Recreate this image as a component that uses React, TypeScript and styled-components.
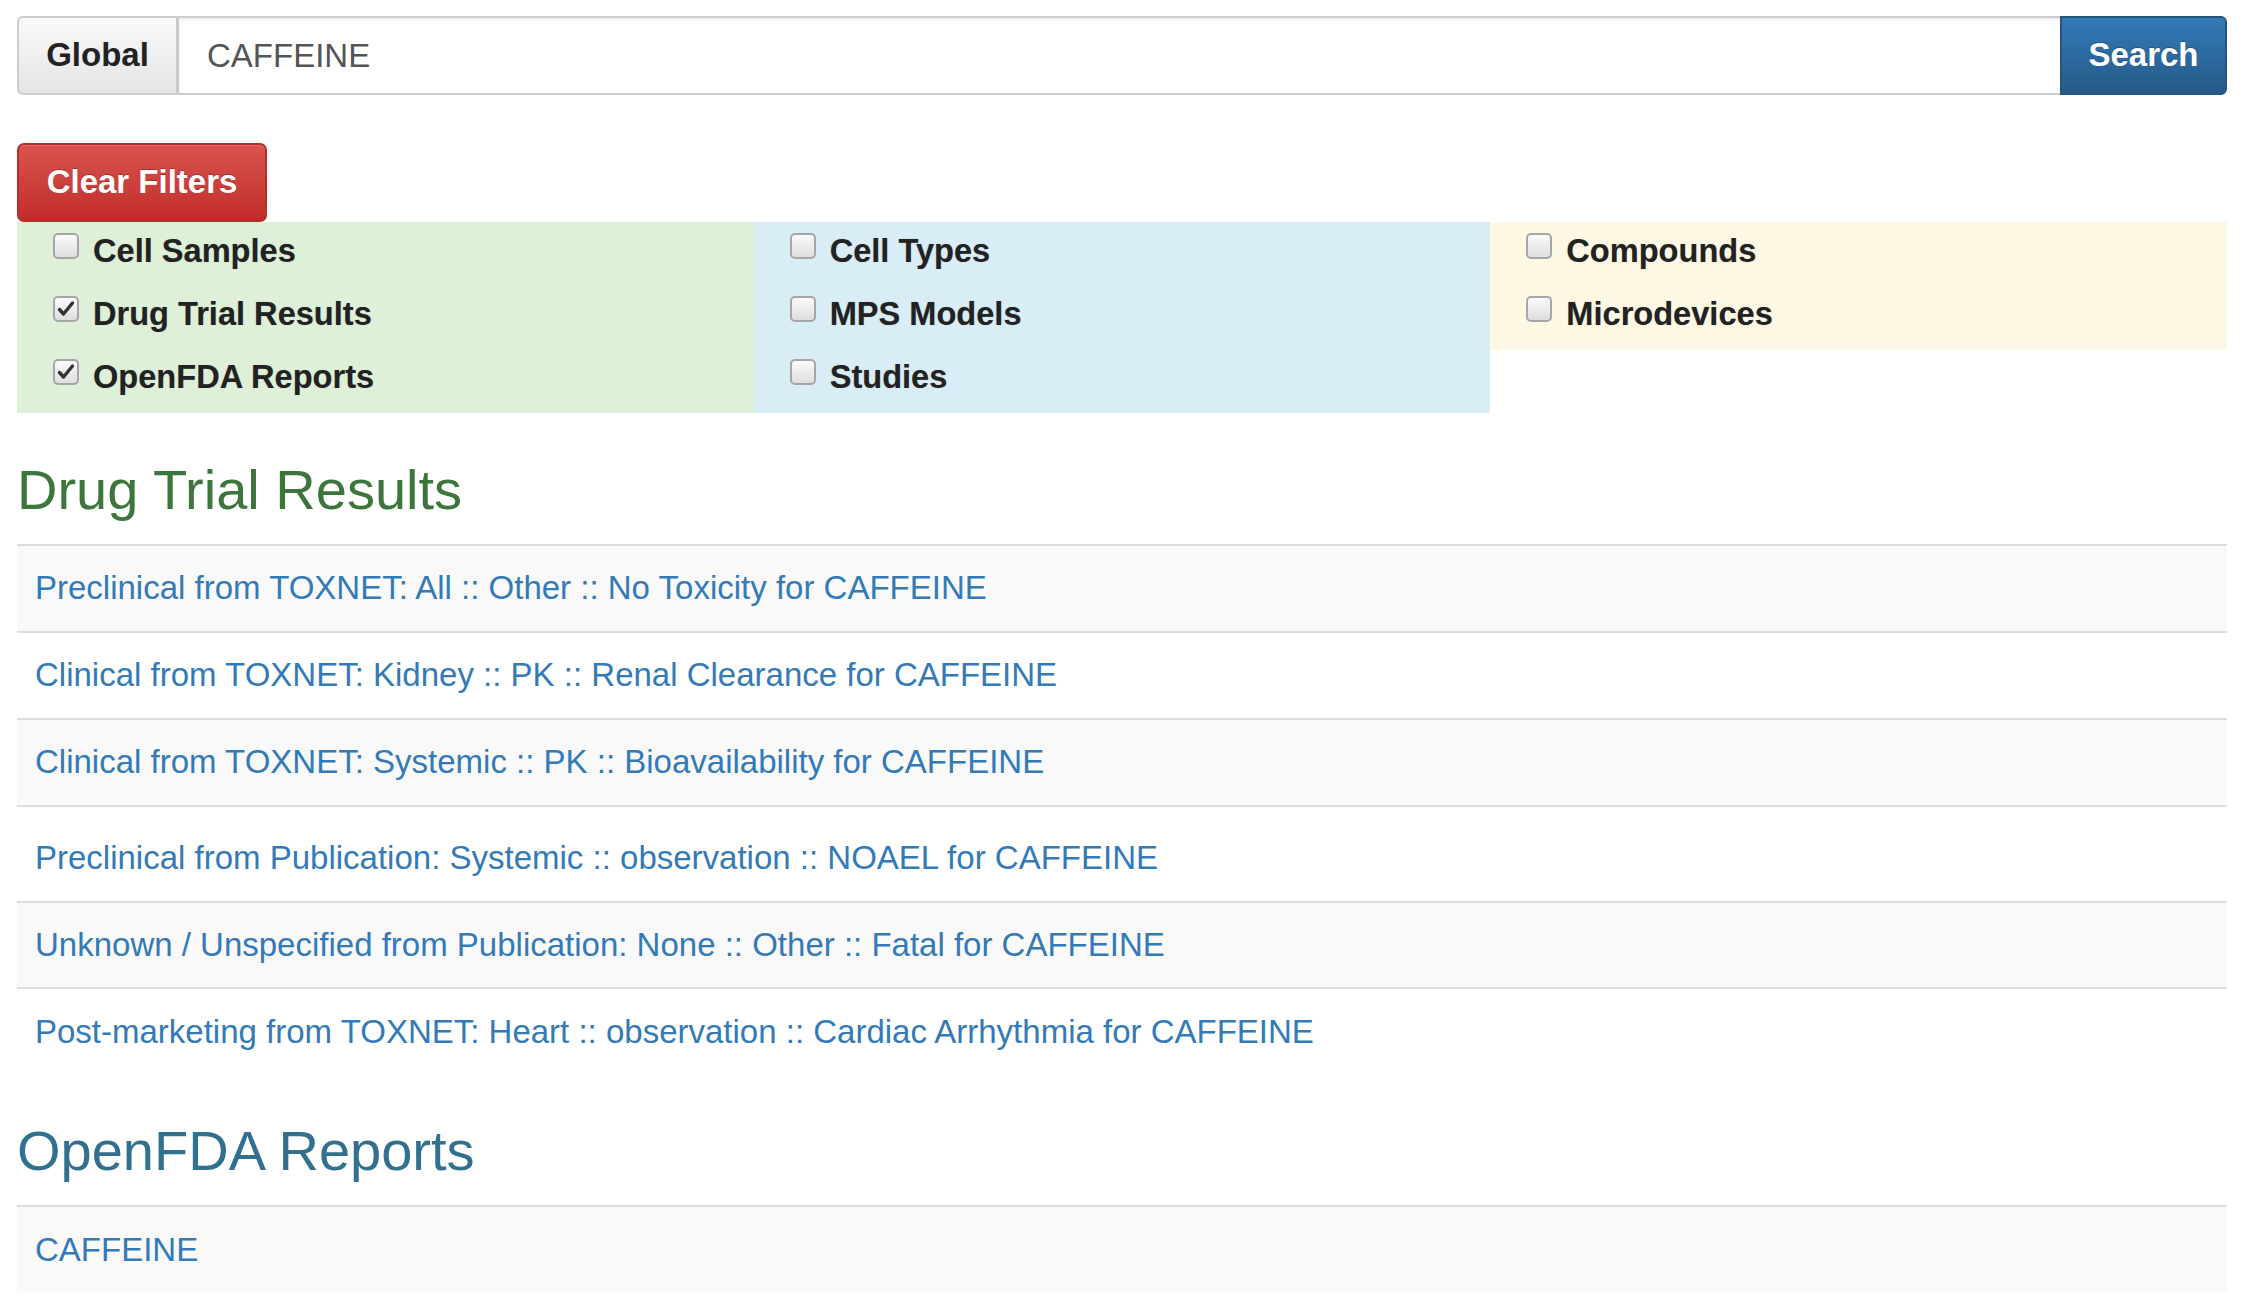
import React from "react";
import styled, {createGlobalStyle} from "styled-components";

const GlobalStyle = createGlobalStyle`
  html, body {
    margin: 0;
    padding: 0;
    background: #fff;
  }

  body {
    font-family: "Liberation Sans", Arial, Helvetica, sans-serif;
    font-size: 33px;
    line-height: 46.6px;
    color: #333;
  }

  * {
    box-sizing: border-box;
  }
`;

const Page = styled.div`
  padding: 16px 32px 0 17px;
`;

const SearchBar = styled.div`
  display: flex;
  height: 79px;
`;

const Addon = styled.div`
  width: 162px;
  display: flex;
  align-items: center;
  justify-content: center;
  font-weight: bold;
  color: #222;
  background: linear-gradient(to bottom, #fafafa 0%, #e4e4e4 100%);
  border: 2px solid #ccc;
  border-right: 3px solid #c8c8c8;
  border-radius: 6px 0 0 6px;
`;

const SearchInput = styled.input`
  flex: 1;
  height: 100%;
  border: 2px solid #ccc;
  border-left: none;
  border-right: none;
  padding: 0 28px;
  font: inherit;
  color: #555;
  outline: none;
  box-shadow: inset 0 2px 3px rgba(0, 0, 0, 0.075);
`;

const SearchButton = styled.button`
  width: 167px;
  height: 100%;
  border: 2px solid #245580;
  border-radius: 0 6px 6px 0;
  background: linear-gradient(to bottom, #337ab7 0%, #265a88 100%);
  color: #fff;
  font: inherit;
  font-weight: bold;
  text-shadow: 0 -1px 0 rgba(0, 0, 0, 0.25);
  cursor: pointer;
`;

const ClearButton = styled.button`
  display: block;
  margin-top: 48px;
  width: 250px;
  height: 79px;
  border: 2px solid #b92c28;
  border-radius: 7px;
  background: linear-gradient(to bottom, #d9534f 0%, #c12e2a 100%);
  color: #fff;
  font: inherit;
  font-weight: bold;
  text-shadow: 0 -1px 0 rgba(0, 0, 0, 0.25);
  box-shadow: inset 0 1px 0 rgba(255, 255, 255, 0.15), 0 1px 1px rgba(0, 0, 0, 0.075);
  cursor: pointer;
`;

type Tone = "success" | "info" | "warning";

const toneBg: Record<Tone, string> = {
    success: "#dff0d8",
    info: "#d9edf7",
    warning: "#fcf8e3",
};

const FilterRow = styled.div`
  display: grid;
  grid-template-columns: repeat(3, 1fr);
  align-items: start;
`;

const FilterColumn = styled.div<{ $tone: Tone }>`
  background: ${({$tone}) => toneBg[$tone]};
  padding: 6px 0 12px 36px;
  display: flex;
  flex-direction: column;
  gap: 16px;
`;

const FilterItem = styled.label`
  display: flex;
  align-items: flex-start;
  height: 47px;
  font-weight: bold;
  font-size: 32.6px;
  color: #222;
  text-shadow: 0 0 1px rgba(0, 0, 0, 0.25);
  cursor: pointer;
`;

const CheckBox = styled.span`
  flex: none;
  width: 26px;
  height: 26px;
  margin: 5px 14px 0 0;
  border: 2px solid #a6a6a6;
  border-radius: 5px;
  background: linear-gradient(to bottom, #fbfbfb 0%, #dedede 100%);
  display: flex;
  align-items: center;
  justify-content: center;
`;

const SectionTitle = styled.h3<{ $tone: Tone }>`
  margin: 46px 0 23px;
  font-size: 56px;
  line-height: 62px;
  font-weight: normal;
  color: ${({$tone}) => ($tone === "success" ? "#3c763d" : "#31708f")};
`;

const ResultList = styled.div`
  & > div:nth-child(odd) {
    background: #f9f9f9;
  }
`;

const ResultRow = styled.div<{ $tall?: boolean }>`
  border-top: 2px solid #ddd;
  padding: ${({$tall}) => ($tall ? "28px 18px 19px" : "19.2px 18px")};
`;

const ResultLink = styled.a`
  color: #337ab7;
  text-decoration: none;
`;

const Check = () => (
    <svg width="18" height="18" viewBox="0 0 18 18">
        <path d="M2.5 9.5 L6.5 14 L15.5 3" fill="none" stroke="#333" strokeWidth="3.4" strokeLinecap="round"
              strokeLinejoin="round"/>
    </svg>
);

interface FilterProps {
    label: string;
    checked?: boolean;
}

const Filter = ({label, checked}: FilterProps) => (
    <FilterItem>
        <CheckBox>{checked && <Check/>}</CheckBox>
        {label}
    </FilterItem>
);

const trials = [
    {text: "Preclinical from TOXNET: All :: Other :: No Toxicity for CAFFEINE"},
    {text: "Clinical from TOXNET: Kidney :: PK :: Renal Clearance for CAFFEINE"},
    {text: "Clinical from TOXNET: Systemic :: PK :: Bioavailability for CAFFEINE"},
    {text: "Preclinical from Publication: Systemic :: observation :: NOAEL for CAFFEINE", tall: true},
    {text: "Unknown / Unspecified from Publication: None :: Other :: Fatal for CAFFEINE"},
    {text: "Post-marketing from TOXNET: Heart :: observation :: Cardiac Arrhythmia for CAFFEINE"},
];

const App = () => {
    return (
        <Page>
            <GlobalStyle/>
            <SearchBar>
                <Addon>Global</Addon>
                <SearchInput defaultValue="CAFFEINE"/>
                <SearchButton>Search</SearchButton>
            </SearchBar>

            <ClearButton>Clear Filters</ClearButton>

            <FilterRow>
                <FilterColumn $tone="success">
                    <Filter label="Cell Samples"/>
                    <Filter label="Drug Trial Results" checked/>
                    <Filter label="OpenFDA Reports" checked/>
                </FilterColumn>
                <FilterColumn $tone="info">
                    <Filter label="Cell Types"/>
                    <Filter label="MPS Models"/>
                    <Filter label="Studies"/>
                </FilterColumn>
                <FilterColumn $tone="warning">
                    <Filter label="Compounds"/>
                    <Filter label="Microdevices"/>
                </FilterColumn>
            </FilterRow>

            <SectionTitle $tone="success">Drug Trial Results</SectionTitle>
            <ResultList>
                {trials.map((t) => (
                    <ResultRow key={t.text} $tall={t.tall}>
                        <ResultLink href="#">{t.text}</ResultLink>
                    </ResultRow>
                ))}
            </ResultList>

            <SectionTitle $tone="info">OpenFDA Reports</SectionTitle>
            <ResultList>
                <ResultRow>
                    <ResultLink href="#">CAFFEINE</ResultLink>
                </ResultRow>
            </ResultList>
        </Page>
    );
};

export default App;
